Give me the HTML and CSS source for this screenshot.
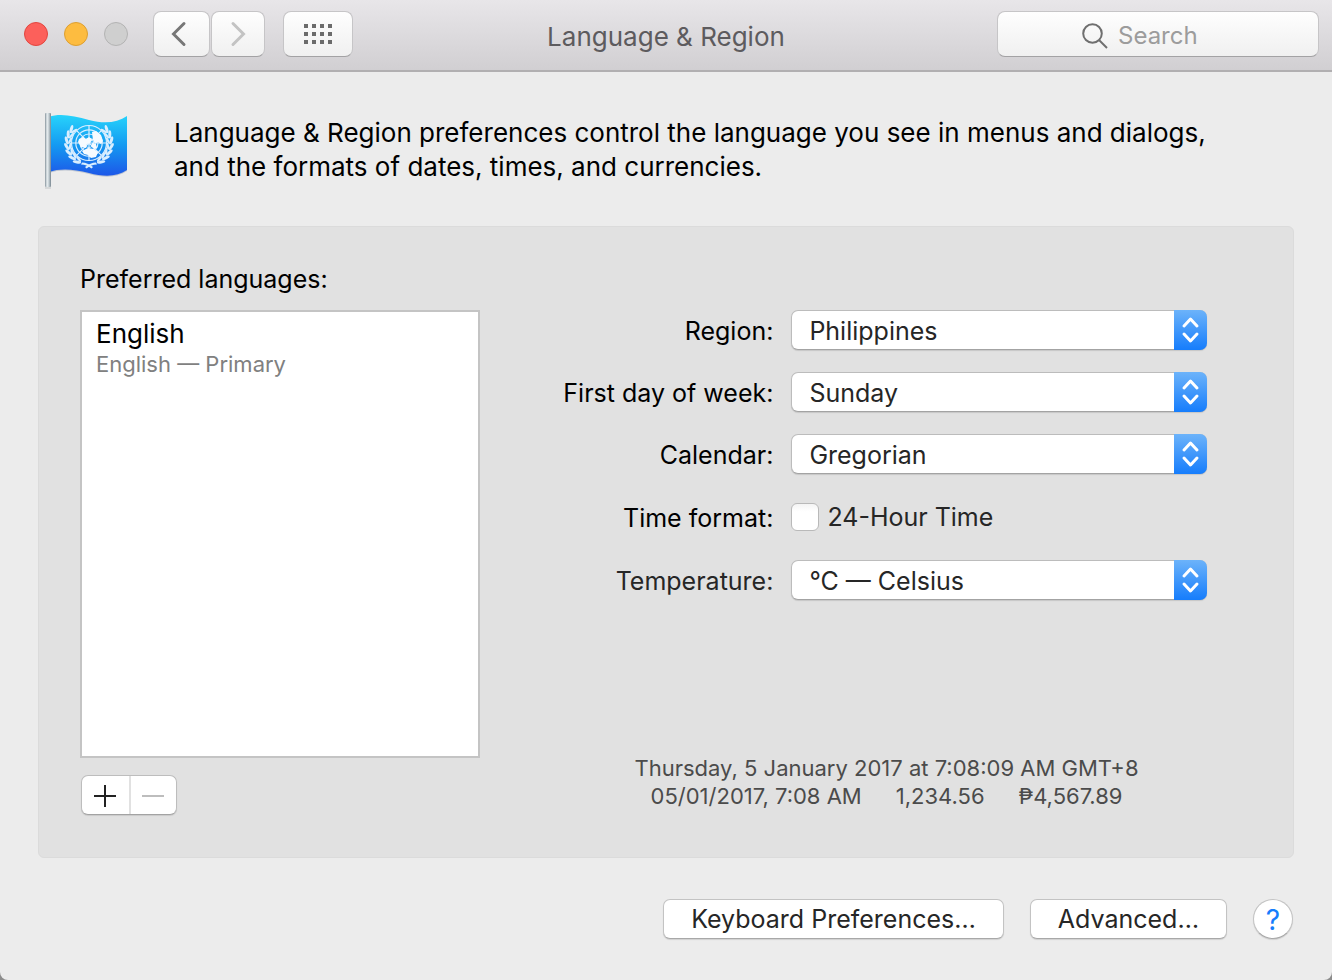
FILE: index.html
```html
<!DOCTYPE html>
<html lang="en">
<head>
<meta charset="utf-8">
<meta name="viewport" content="width=device-width, initial-scale=1">
<title>Language &amp; Region</title>
<link rel="stylesheet" href="styles.css">
</head>
<body>
<div class="window">
  <header class="titlebar">
    <div class="tools">
      <div class="lights">
        <button class="light light-close" type="button" aria-label="Close"></button>
        <button class="light light-minimize" type="button" aria-label="Minimize"></button>
        <button class="light light-zoom" type="button" aria-label="Zoom" disabled></button>
      </div>
      <div class="nav">
        <button class="tool back" type="button" aria-label="Back">
          <svg width="16" height="26" viewBox="0 0 16 26" fill="none" stroke="#777" stroke-width="3" stroke-linecap="round"><path d="M13 2.5 2.5 13 13 23.500"/></svg>
        </button>
        <button class="tool forward" type="button" aria-label="Forward" disabled>
          <svg width="16" height="26" viewBox="0 0 16 26" fill="none" stroke="#c3c3c3" stroke-width="3" stroke-linecap="round"><path d="M3 2.500 13.500 13 3 23.500"/></svg>
        </button>
      </div>
      <button class="tool show-all" type="button" aria-label="Show all">
        <svg width="28" height="20" viewBox="0 0 28 20" fill="#6b6b6b"><path d="M0 0h4v4H0zM8 0h4v4H8zM16 0h4v4h-4zM24 0h4v4h-4zM0 8h4v4H0zM8 8h4v4H8zM16 8h4v4h-4zM24 8h4v4h-4zM0 16h4v4H0zM8 16h4v4H8zM16 16h4v4h-4zM24 16h4v4h-4z"/></svg>
      </button>
    </div>
    <h1 class="title">Language &amp; Region</h1>
    <label class="search">
      <svg width="26" height="26" viewBox="0 0 26 26" fill="none" stroke="#6f6f6f" stroke-width="2"><circle cx="10.500" cy="10.500" r="9.300"/><path d="m17 17 8 8"/></svg>
      <input class="search-input" type="search" placeholder="Search" aria-label="Search">
    </label>
  </header>

  <main class="content">
    <section class="intro">
      <svg class="flag" width="86" height="78" viewBox="0 0 86 78" role="img" aria-label="United Nations flag">
        <defs>
          <linearGradient id="cloth" x1="0" y1="0" x2="0" y2="1"><stop offset="0" stop-color="#27d3fb"/><stop offset=".5" stop-color="#1499f1"/><stop offset="1" stop-color="#1d57e8"/></linearGradient>
          <linearGradient id="pole" x1="0" y1="0" x2="1" y2="0"><stop offset="0" stop-color="#84919a"/><stop offset=".35" stop-color="#eaf0f2"/><stop offset=".65" stop-color="#c3cdd2"/><stop offset="1" stop-color="#76848e"/></linearGradient>
          <g id="leaves">
            <ellipse cx="22.500" cy="30" rx="1.500" ry="4.200" transform="rotate(-20 22.500 30)"/>
            <ellipse cx="26" cy="30" rx="1.200" ry="3.600" transform="rotate(22 26 30)"/>
          </g>
          <g id="branch" fill="#d9eeff">
            <use href="#leaves" transform="rotate(36 45 31)"/>
            <use href="#leaves" transform="rotate(20 45 31)"/>
            <use href="#leaves" transform="rotate(4 45 31)"/>
            <use href="#leaves" transform="rotate(-12 45 31)"/>
            <use href="#leaves" transform="rotate(-28 45 31)"/>
            <use href="#leaves" transform="rotate(-44 45 31)"/>
            <use href="#leaves" transform="rotate(-60 45 31)"/>
            <path d="M38 50.500c4 0 7 1.500 11 4.500l-1.500 1.500C44 54 41 52.500 37 52.500z"/>
          </g>
        </defs>
        <path d="M5 5C16 1 30 4 45 8C60 12 73 11 83 4V58C73 65 60 65 45 61C30 57 16 56 5 60Z" fill="#536a91" opacity=".3" transform="translate(0 1)"/>
        <path d="M5 5C16 1 30 4 45 8C60 12 73 11 83 4V58C73 65 60 65 45 61C30 57 16 56 5 60Z" fill="url(#cloth)"/>
        <g fill="none" stroke="#d9eeff" stroke-width="1.200">
          <circle cx="45" cy="31" r="17.500"/><circle cx="45" cy="31" r="13.200"/><circle cx="45" cy="31" r="9"/><circle cx="45" cy="31" r="4.500"/>
          <path d="M45 13.500v35M27.500 31h35M32.600 18.600l24.800 24.800M57.400 18.600 32.600 43.400"/>
        </g>
        <path fill="#f6fbff" d="m34 30 1-3 4-2 3 2 3-2 3 2-2 4-3 1-1 4-5-1zM48 20l4-1 5 4 2 6-2 3-3-2-3 2-2-4zM38 39l6-3 6 1 4 3-2 5-5 1-3-3-4-1zM48 31l4 1 1 4-3 1-3-3z"/>
        <use href="#branch"/>
        <use href="#branch" transform="matrix(-1 0 0 1 90 0)"/>
        <rect x="1" y="1" width="6" height="74" rx="1" fill="url(#pole)"/>
        <path d="M1 76h6" stroke="#bfc3c5"/>
      </svg>
      <p class="intro-text">Language &amp; Region preferences control the language you see in menus and dialogs, and the formats of dates, times, and currencies.</p>
    </section>

    <section class="panel">
      <div class="languages">
        <h2 class="heading" id="languages-heading">Preferred languages:</h2>
        <ul class="language-list" aria-labelledby="languages-heading">
          <li class="language"><span class="language-name">English</span><span class="language-note">English — Primary</span></li>
        </ul>
        <div class="segments">
          <button class="segment" type="button" aria-label="Add language"><svg width="22" height="22" viewBox="0 0 22 22" stroke="#222" stroke-width="2"><path d="M0 11h22M11 0v22"/></svg></button>
          <button class="segment" type="button" aria-label="Remove language" disabled><svg width="22" height="22" viewBox="0 0 22 22" stroke="#bdbdbd" stroke-width="2"><path d="M0 11h22"/></svg></button>
        </div>
      </div>

      <div class="formats">
        <form class="settings">
          <div class="row">
            <label class="label" for="region">Region:</label>
            <span class="popup"><select class="select" id="region"><option>Philippines</option></select><svg class="arrows" viewBox="0 0 33 40"><path d="m10 16 6.500-7 6.500 7M10 24l6.500 7 6.500-7"/></svg></span>
          </div>
          <div class="row">
            <label class="label" for="first-day">First day of week:</label>
            <span class="popup"><select class="select" id="first-day"><option>Sunday</option></select><svg class="arrows" viewBox="0 0 33 40"><path d="m10 16 6.500-7 6.500 7M10 24l6.500 7 6.500-7"/></svg></span>
          </div>
          <div class="row">
            <label class="label" for="calendar">Calendar:</label>
            <span class="popup"><select class="select" id="calendar"><option>Gregorian</option></select><svg class="arrows" viewBox="0 0 33 40"><path d="m10 16 6.500-7 6.500 7M10 24l6.500 7 6.500-7"/></svg></span>
          </div>
          <div class="row row-check">
            <label class="label" for="time-format">Time format:</label>
            <label class="check"><input class="checkbox" id="time-format" type="checkbox">24-Hour Time</label>
          </div>
          <div class="row row-soft">
            <label class="label" for="temperature">Temperature:</label>
            <span class="popup"><select class="select" id="temperature"><option>°C — Celsius</option></select><svg class="arrows" viewBox="0 0 33 40"><path d="m10 16 6.500-7 6.500 7M10 24l6.500 7 6.500-7"/></svg></span>
          </div>
        </form>
        <div class="sample">
          <p class="sample-line">Thursday, 5 January 2017 at 7:08:09 AM GMT+8</p>
          <p class="sample-line"><span>05/01/2017, 7:08 AM</span><span>1,234.56</span><span>₱4,567.89</span></p>
        </div>
      </div>
    </section>

    <footer class="actions">
      <button class="button" type="button">Keyboard Preferences…</button>
      <button class="button" type="button">Advanced…</button>
      <button class="help" type="button" aria-label="Help">?</button>
    </footer>
  </main>
</div>
</body>
</html>
```
FILE: styles.css
```css
* {
  box-sizing: border-box;
}

body {
  margin: 0;
  background: #8c8c8c;
  color: #000;
  font-family: Inter, "Noto Sans", sans-serif;
  font-size: 25px;
  line-height: 34px;
}

button,
input,
select {
  font: inherit;
  color: inherit;
}

h1,
h2,
p,
ul {
  margin: 0;
  padding: 0;
}

svg {
  display: block;
  flex: none;
}

.window {
  display: flex;
  flex-direction: column;
  min-height: 100vh;
  border-radius: 0 0 8px 8px;
  background: #ececec;
}

.titlebar {
  display: grid;
  grid-template-columns: 1fr auto 1fr;
  align-items: center;
  padding: 11px 13px 13px;
  border-bottom: 2px solid #b1afb1;
  background: linear-gradient(#e8e6e9, #d1cfd2);
}

.tools,
.lights,
.nav {
  display: flex;
  align-items: center;
}

.lights {
  gap: 16px;
  margin: 0 25px 0 11px;
}

.light {
  width: 24px;
  height: 24px;
  padding: 0;
  border: 1px solid;
  border-radius: 50%;
}

.light-close {
  border-color: #e2463f;
  background: #fc605b;
}

.light-minimize {
  border-color: #dd9f31;
  background: #fdbc40;
}

.light-zoom {
  border-color: #b3b3b3;
  background: #cfcfcf;
}

.nav {
  gap: 1px;
  margin-right: 18px;
}

.tool,
.search {
  display: flex;
  align-items: center;
  height: 46px;
  border: 1px solid #c6c5c7;
  border-bottom-color: #a3a2a4;
  border-radius: 8px;
  background: linear-gradient(#fefefe, #f0f0f0);
}

.tool {
  justify-content: center;
  padding: 0;
}

.back {
  width: 57px;
  padding-right: 6px;
}

.forward {
  width: 54px;
}

.show-all {
  width: 70px;
}

.title {
  padding-top: 6px;
  color: #5d5b5e;
  font-size: 26px;
  font-weight: 400;
}

.search {
  justify-self: end;
  gap: 10px;
  width: 322px;
  max-width: 90%;
  padding: 3px 0 0 84px;
}

.search-input {
  flex: 1;
  min-width: 0;
  padding: 0;
  border: 0;
  outline: 0;
  background: none;
  font-size: 24px;
  appearance: none;
}

.search-input::placeholder {
  color: #9c9c9c;
  opacity: 1;
}

.content {
  display: flex;
  flex: 1;
  flex-direction: column;
  padding: 40px 38px;
}

.intro {
  display: flex;
  gap: 44px;
  padding-left: 6px;
}

.intro-text {
  max-width: 1060px;
  padding-top: 4px;
  font-size: 26px;
}

.panel {
  display: flex;
  margin-top: 36px;
  padding: 35px 0 42px 41px;
  border: 1px solid #dbdbdb;
  border-radius: 6px;
  background: #e1e1e1;
}

.languages {
  flex: none;
  width: 400px;
}

.heading {
  font-size: 25px;
  font-weight: 400;
}

.language-list {
  height: 448px;
  margin-top: 14px;
  padding: 5px 14px;
  border: 2px solid #c4c4c4;
  background: #fff;
  list-style: none;
}

.language-name,
.language-note {
  display: block;
}

.language-name {
  font-size: 26px;
}

.language-note {
  color: #808080;
  font-size: 22px;
  line-height: 26px;
}

.segments {
  display: inline-flex;
  margin: 17px 0 0 1px;
  border: 1px solid #bdbdbd;
  border-bottom-color: #a3a3a3;
  border-radius: 7px;
  background: #fff;
  box-shadow: 0 1px 1px rgba(0, 0, 0, 0.1);
}

.segment {
  display: grid;
  place-items: center;
  width: 47px;
  height: 38px;
  padding: 2px 2px 0 0;
  border: 0;
  background: none;
}

.segment + .segment {
  border-left: 2px solid #e1e1e1;
}

.formats {
  display: flex;
  flex: 1;
  flex-direction: column;
  justify-content: space-between;
}

.settings {
  display: flex;
  flex-direction: column;
  gap: 22px;
  padding: 48px 86px 0 0;
}

.row {
  display: grid;
  grid-template-columns: 12fr 17fr;
  gap: 18px;
  align-items: center;
}

.row-check {
  min-height: 42px;
}

.row-soft .label {
  color: #262626;
}

.label {
  padding-top: 1px;
  text-align: right;
}

.popup {
  position: relative;
  display: block;
}

.select {
  display: block;
  width: 100%;
  height: 40px;
  padding: 1px 48px 0 17px;
  border: 1px solid #bcbcbc;
  border-bottom-color: #a3a3a3;
  border-radius: 7px;
  background: #fff;
  box-shadow: 0 1px 1px rgba(0, 0, 0, 0.12);
  color: #262626;
  appearance: none;
}

.arrows {
  position: absolute;
  top: 0;
  right: 0;
  width: 33px;
  height: 40px;
  border-radius: 0 7px 7px 0;
  background: linear-gradient(#6cb3fa, #167dfc);
  fill: none;
  stroke: #fff;
  stroke-width: 3;
  stroke-linecap: round;
  stroke-linejoin: round;
  pointer-events: none;
}

.check {
  display: flex;
  gap: 8px;
  align-items: center;
  color: #262626;
}

.checkbox {
  width: 28px;
  height: 28px;
  margin: 0;
  border: 1px solid #b9b9b9;
  border-radius: 6px;
  background: linear-gradient(#f4f4f4, #fff 30%);
  appearance: none;
}

.sample {
  padding-bottom: 5px;
  color: #4b4b4b;
  font-size: 22px;
  line-height: 28px;
}

.sample-line {
  display: flex;
  gap: 34px;
  justify-content: center;
}

.actions {
  display: flex;
  gap: 26px;
  justify-content: flex-end;
  margin-top: 41px;
  padding-right: 1px;
}

.button,
.help {
  height: 40px;
  border: 1px solid #c3c3c3;
  border-bottom-color: #a8a8a8;
  background: #fff;
  box-shadow: 0 1px 1px rgba(0, 0, 0, 0.12);
}

.button {
  padding: 0 27px;
  border-radius: 7px;
  color: #262626;
}

.help {
  width: 40px;
  padding: 2px 0 0;
  border-radius: 50%;
  color: #167dfc;
  font-size: 28px;
}
```
